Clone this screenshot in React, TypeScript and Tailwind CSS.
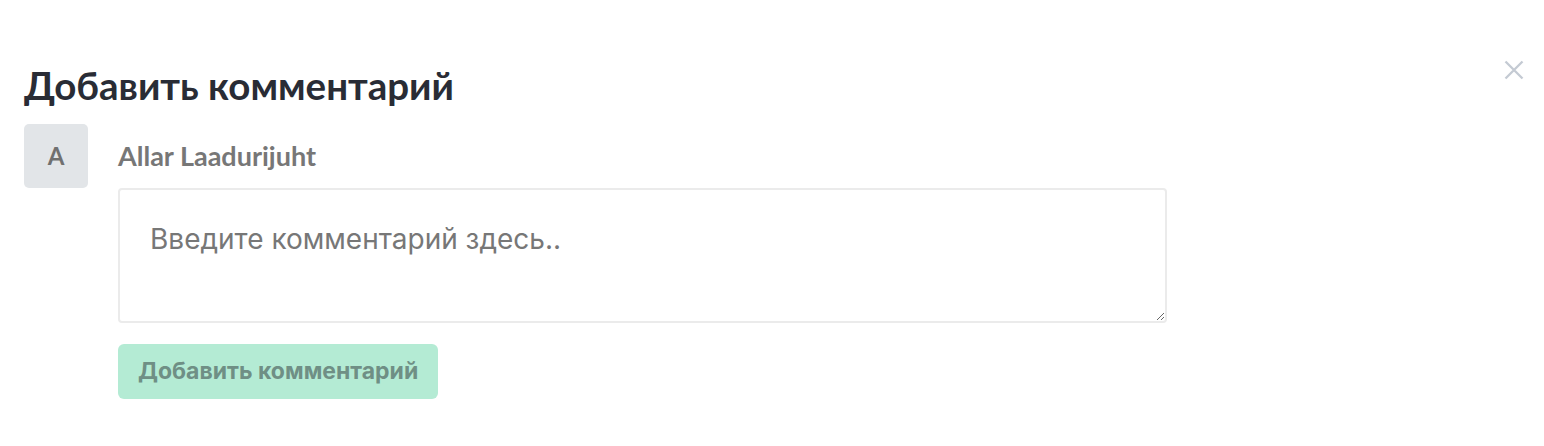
import React, { useState } from 'react'

export default function App() {
	const [text, setText] = useState('')

	return (
		<div className="w-full min-h-[446px] bg-white relative font-['Lato','Noto_Sans',sans-serif]">
			{/* Close */}
			<button className="absolute right-[20px] top-[60px] w-[20px] h-[20px] flex items-center justify-center text-[#c4cad3]">
				<svg width="20" height="20" viewBox="0 0 20 20" fill="none" stroke="currentColor" strokeWidth="2.3">
					<path d="M1.5 1.5 L18.5 18.5 M18.5 1.5 L1.5 18.5" />
				</svg>
			</button>

			<div className="pt-[62px] px-[24px]">
				<h2 className="text-[38.5px] leading-[46px] font-bold text-[#292c35]">Добавить комментарий</h2>

				<div className="flex mt-[16px]">
					<div className="w-[64px] h-[64px] shrink-0 rounded-[5px] bg-[#e2e5e8] flex items-center justify-center text-[24px] font-bold text-[#707070]">
						A
					</div>
					<div className="ml-[30px] w-[1049px]">
						<div className="h-[64px] flex items-center text-[27px] font-bold text-[#777777]">Allar Laadurijuht</div>
						<textarea
							value={text}
							onChange={e => setText(e.target.value)}
							placeholder="Введите комментарий здесь.."
							className="block w-full h-[135px] rounded-[4px] border-2 border-[#ebebeb] px-[30px] pt-[33px] pb-[10px] text-[28px] leading-[32px] text-[#333] placeholder:text-[#777777] font-['Inter','Noto_Sans',sans-serif] outline-none"
						/>
						<button
							disabled
							className="mt-[21px] h-[55px] px-[20px] rounded-[6px] bg-[#b4ebd4] text-[23px] font-bold text-[#6f8f85] font-['Inter','Noto_Sans',sans-serif]"
						>
							Добавить комментарий
						</button>
					</div>
				</div>
			</div>
		</div>
	)
}
